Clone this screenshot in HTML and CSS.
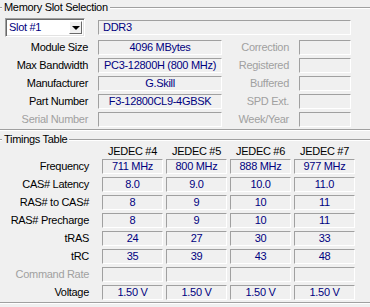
FILE: index.html
```html
<!DOCTYPE html>
<html lang="en">

<head>
    <meta charset="UTF-8">
    <title>Memory SPD</title>
    <link rel="stylesheet" href="styles.css">
</head>

<body>
    <div class="group slot-group">
        <div class="group-title">
            <span class="dash"></span>
            <span class="title">Memory Slot Selection</span>
            <span class="rule"></span>
        </div>
        <div class="slot-grid">
            <div class="combo">
                <span class="combo-text">Slot #1</span>
                <span class="combo-btn"><span class="arrow"></span></span>
            </div>
            <div class="field wide left">DDR3</div>

            <div class="label">Module Size</div>
            <div class="field">4096 MBytes</div>
            <div class="label off">Correction</div>
            <div class="field"></div>

            <div class="label">Max Bandwidth</div>
            <div class="field">PC3-12800H (800 MHz)</div>
            <div class="label off">Registered</div>
            <div class="field"></div>

            <div class="label">Manufacturer</div>
            <div class="field">G.Skill</div>
            <div class="label off">Buffered</div>
            <div class="field"></div>

            <div class="label">Part Number</div>
            <div class="field">F3-12800CL9-4GBSK</div>
            <div class="label off">SPD Ext.</div>
            <div class="field"></div>

            <div class="label off">Serial Number</div>
            <div class="field"></div>
            <div class="label off">Week/Year</div>
            <div class="field"></div>
        </div>
    </div>

    <div class="group timing-group">
        <div class="group-title">
            <span class="dash"></span>
            <span class="title">Timings Table</span>
            <span class="rule"></span>
        </div>
        <div class="timing-grid">
            <div></div>
            <div class="head">JEDEC #4</div>
            <div class="head">JEDEC #5</div>
            <div class="head">JEDEC #6</div>
            <div class="head">JEDEC #7</div>

            <div class="label">Frequency</div>
            <div class="field">711 MHz</div>
            <div class="field">800 MHz</div>
            <div class="field">888 MHz</div>
            <div class="field">977 MHz</div>

            <div class="label">CAS# Latency</div>
            <div class="field">8.0</div>
            <div class="field">9.0</div>
            <div class="field">10.0</div>
            <div class="field">11.0</div>

            <div class="label">RAS# to CAS#</div>
            <div class="field">8</div>
            <div class="field">9</div>
            <div class="field">10</div>
            <div class="field">11</div>

            <div class="label">RAS# Precharge</div>
            <div class="field">8</div>
            <div class="field">9</div>
            <div class="field">10</div>
            <div class="field">11</div>

            <div class="label">tRAS</div>
            <div class="field">24</div>
            <div class="field">27</div>
            <div class="field">30</div>
            <div class="field">33</div>

            <div class="label">tRC</div>
            <div class="field">35</div>
            <div class="field">39</div>
            <div class="field">43</div>
            <div class="field">48</div>

            <div class="label off">Command Rate</div>
            <div class="field"></div>
            <div class="field"></div>
            <div class="field"></div>
            <div class="field"></div>

            <div class="label">Voltage</div>
            <div class="field">1.50 V</div>
            <div class="field">1.50 V</div>
            <div class="field">1.50 V</div>
            <div class="field">1.50 V</div>
        </div>
    </div>
</body>

</html>
```

FILE: styles.css
```css
body {
    margin: 0;
    background-color: #F0F0F0;
    font-family: 'Liberation Sans', Arial, sans-serif;
    font-size: 11px;
    letter-spacing: -0.3px;
    color: #000;
    width: 370px;
    height: 307px;
    overflow: hidden;
}

/* group boxes: only top and bottom edges are visible */
.group {
    border-bottom: 1px solid #A0A0A0;
    box-shadow: 0 1px 0 #FFFFFF;
}

.group-title {
    display: flex;
    height: 14px;
    line-height: 14px;
}

.dash {
    width: 2px;
    margin-top: 7px;
    height: 0;
    border-top: 1px solid #A0A0A0;
    border-bottom: 1px solid #FFFFFF;
}

.title {
    padding: 0 2px 0 2px;
    white-space: nowrap;
}

.rule {
    flex: 1;
    margin-top: 7px;
    height: 0;
    border-top: 1px solid #A0A0A0;
    border-bottom: 1px solid #FFFFFF;
}

.slot-group {
    padding-bottom: 2px;
}

.slot-grid {
    display: grid;
    grid-template-columns: 98px 124px 77px 52px;
    grid-template-rows: 19px repeat(5, 15px);
    row-gap: 3px;
    margin-top: 4px;
    align-items: center;
}

.label {
    text-align: right;
    padding-right: 10px;
    white-space: nowrap;
    line-height: 15px;
}

.label.off {
    color: #A0A0A0;
}

.field {
    box-sizing: border-box;
    height: 15px;
    line-height: 13px;
    border-top: 1px solid #A0A0A0;
    border-left: 1px solid #A0A0A0;
    border-bottom: 1px solid #FFFFFF;
    border-right: 1px solid #FFFFFF;
    color: #000080;
    text-align: center;
    white-space: nowrap;
    overflow: hidden;
}

.field.wide {
    grid-column: 2 / 5;
}

.field.left {
    text-align: left;
    padding-left: 4px;
}

.combo {
    display: flex;
    box-sizing: border-box;
    margin-left: 5px;
    width: 80px;
    height: 19px;
    background-color: #FFFFFF;
    border-top: 1px solid #A0A0A0;
    border-left: 1px solid #A0A0A0;
    border-bottom: 1px solid #FFFFFF;
    border-right: 1px solid #FFFFFF;
    box-shadow: inset 1px 1px 0 #696969, inset -1px -1px 0 #E3E3E3;
}

.combo-text {
    flex: 1;
    color: #000080;
    line-height: 17px;
    padding-left: 3px;
}

.combo-btn {
    display: flex;
    justify-content: center;
    align-items: center;
    box-sizing: border-box;
    width: 13px;
    margin: 2px 2px 2px 0;
    background-color: #F0F0F0;
    border-top: 1px solid #FFFFFF;
    border-left: 1px solid #FFFFFF;
    border-bottom: 1px solid #696969;
    border-right: 1px solid #696969;
}

.arrow {
    width: 0;
    height: 0;
    border-left: 4px solid transparent;
    border-right: 4px solid transparent;
    border-top: 4px solid #000;
}

.timing-group {
    margin-top: 2px;
    padding-bottom: 2px;
}

.timing-grid {
    display: grid;
    grid-template-columns: 99px repeat(4, 61px);
    grid-template-rows: 10px repeat(8, 15px);
    column-gap: 3px;
    row-gap: 3px;
    align-items: center;
}

.head {
    text-align: center;
    line-height: 10px;
    white-space: nowrap;
}
```
